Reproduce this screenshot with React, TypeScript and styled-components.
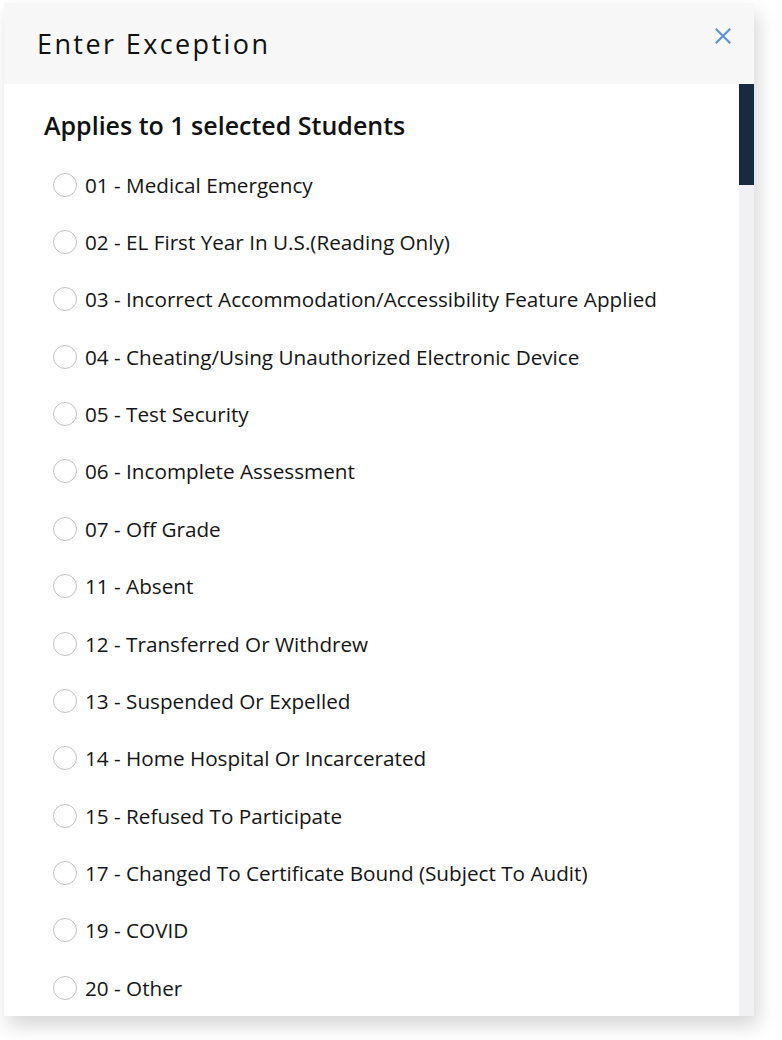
import * as React from 'react';
import styled, { createGlobalStyle } from 'styled-components';

const GlobalStyle = createGlobalStyle`
  body {
    margin: 0;
    background: #ffffff;
    font-family: 'Open Sans', 'Noto Sans', sans-serif;
  }
`;

const Page = styled.div`
  padding: 3px 28px 24px 4px;
  width: 750px;
`;

const Modal = styled.div`
  width: 750px;
  background: #ffffff;
  box-shadow: 4px 10px 18px rgba(0, 0, 0, 0.16);
  display: flex;
  flex-direction: column;
`;

const Header = styled.div`
  height: 81px;
  background: #f7f7f7;
  display: flex;
  align-items: center;
  justify-content: space-between;
  padding: 0 23px 0 33px;
  box-sizing: border-box;
`;

const Title = styled.h2`
  margin: 0;
  font-size: 27px;
  font-weight: 400;
  letter-spacing: 2.4px;
  color: #111;
`;

const CloseButton = styled.button`
  border: none;
  background: none;
  padding: 0;
  margin-bottom: 15px;
  width: 16px;
  height: 16px;
  cursor: pointer;
  display: flex;
`;

const Body = styled.div`
  display: flex;
  height: 932px;
  overflow: hidden;
`;

const Content = styled.div`
  flex: 1;
  padding: 16px 0 0 40px;
`;

const Subtitle = styled.h3`
  margin: 0 0 6px 0;
  font-size: 25px;
  font-weight: 600;
  color: #111;
  line-height: 50px;
`;

const OptionList = styled.div`
  display: flex;
  flex-direction: column;
  padding-left: 9px;
`;

const Option = styled.label`
  display: flex;
  align-items: center;
  height: 57.36px;
  font-size: 20.7px;
  color: #151515;
  cursor: pointer;
`;

const Radio = styled.span`
  width: 22px;
  height: 22px;
  border: 1.5px solid #c2c2c2;
  border-radius: 50%;
  margin-right: 8px;
  background: #fff;
  flex-shrink: 0;
`;

const ScrollTrack = styled.div`
  width: 15px;
  background: #f0f0f5;
`;

const ScrollThumb = styled.div`
  height: 101px;
  background: #172a40;
`;

const options = [
  '01 - Medical Emergency',
  '02 - EL First Year In U.S.(Reading Only)',
  '03 - Incorrect Accommodation/Accessibility Feature Applied',
  '04 - Cheating/Using Unauthorized Electronic Device',
  '05 - Test Security',
  '06 - Incomplete Assessment',
  '07 - Off Grade',
  '11 - Absent',
  '12 - Transferred Or Withdrew',
  '13 - Suspended Or Expelled',
  '14 - Home Hospital Or Incarcerated',
  '15 - Refused To Participate',
  '17 - Changed To Certificate Bound (Subject To Audit)',
  '19 - COVID',
  '20 - Other',
];

const App = () => {
  return (
    <Page>
      <GlobalStyle />
      <Modal>
        <Header>
          <Title>Enter Exception</Title>
          <CloseButton aria-label="Close">
            <svg width="16" height="16" viewBox="0 0 16 16">
              <path d="M1.5 1.5 L14.5 14.5 M14.5 1.5 L1.5 14.5" stroke="#5b93dc" strokeWidth="2.2" strokeLinecap="square" />
            </svg>
          </CloseButton>
        </Header>
        <Body>
          <Content>
            <Subtitle>Applies to 1 selected Students</Subtitle>
            <OptionList>
              {options.map((o) => (
                <Option key={o}>
                  <Radio />
                  {o}
                </Option>
              ))}
            </OptionList>
          </Content>
          <ScrollTrack>
            <ScrollThumb />
          </ScrollTrack>
        </Body>
      </Modal>
    </Page>
  );
};

export default App;
